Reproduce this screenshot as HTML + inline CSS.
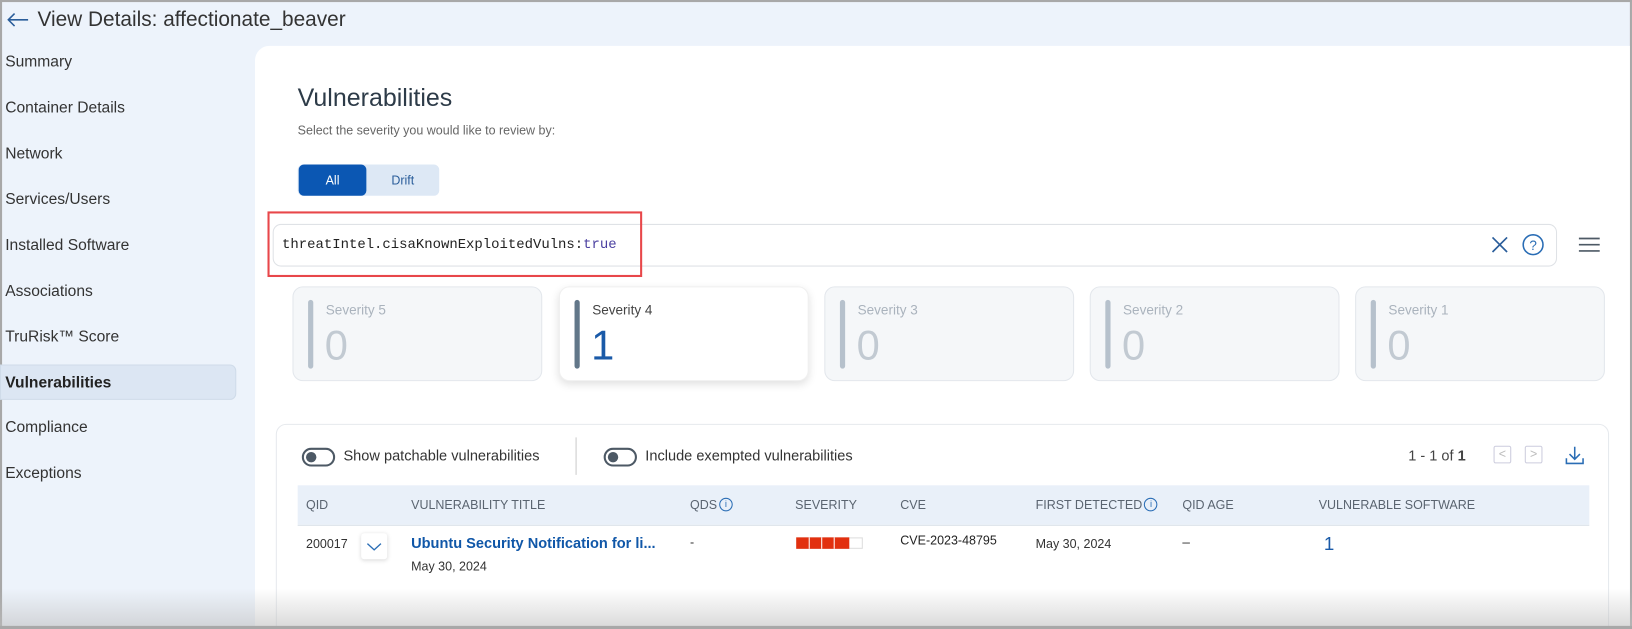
<!DOCTYPE html>
<html><head><meta charset="utf-8"><style>
html,body{margin:0;padding:0;width:1632px;height:629px;overflow:hidden;background:#fff;font-family:"Liberation Sans",Arial,sans-serif;}
#w{position:absolute;left:0;top:0;width:1568px;height:604px;transform:scale(1.0408,1.0414);transform-origin:0 0;background:#edf3fb;overflow:hidden;}
.a{position:absolute;white-space:nowrap;}
.side{font-size:15px;color:#333;left:5px;}
.card{position:absolute;top:275px;width:240px;height:91px;border-radius:10px;background:#f5f7f9;border:1px solid #e3e7ec;box-sizing:border-box;}
.card .bar{position:absolute;left:14px;top:12px;width:5px;height:66px;border-radius:3px;background:#b6c1cc;}
.card .l{position:absolute;left:31px;top:14px;font-size:13px;color:#aab3bd;}
.card .n{position:absolute;left:30px;top:34px;font-size:40px;color:#c2cad2;font-weight:300;}
.th{position:absolute;top:478px;font-size:12px;color:#5a6470;}
.th i{font-style:normal;display:inline-block;width:11px;height:11px;border:1px solid #2a6db5;border-radius:50%;color:#2a6db5;font-size:9px;line-height:11px;text-align:center;vertical-align:top;margin-left:2px;}
.tg{position:absolute;width:28px;height:14px;border:2px solid #4d5965;border-radius:10px;}
.tg:after{content:"";position:absolute;left:2px;top:2px;width:10px;height:10px;border-radius:50%;background:#4d5965;}
</style></head><body><div id="w">
<div class="a" style="left:0;top:0;width:1568px;height:2px;background:#a8a8a8"></div>
<div class="a" style="left:0;top:0;width:2px;height:604px;background:#a8a8a8"></div>
<div class="a" style="left:1566px;top:0;width:2px;height:604px;background:#a8a8a8"></div>
<svg class="a" style="left:6px;top:12px" width="22" height="14"><path d="M21 7H2M8 1L2 7L8 13" fill="none" stroke="#2a5d9a" stroke-width="1.5"/></svg>
<div class="a" style="left:36px;top:8px;font-size:20px;color:#333">View Details: affectionate_beaver</div>

<div class="a side" style="top:51px">Summary</div>
<div class="a side" style="top:95px">Container Details</div>
<div class="a side" style="top:139px">Network</div>
<div class="a side" style="top:183px">Services/Users</div>
<div class="a side" style="top:227px">Installed Software</div>
<div class="a side" style="top:271px">Associations</div>
<div class="a side" style="top:315px">TruRisk™ Score</div>
<div class="a" style="left:0;top:350px;width:227px;height:34px;background:#dce6f3;border-radius:0 6px 6px 0;border:1px solid #cfdbe9;box-sizing:border-box"></div>
<div class="a side" style="top:359px;font-weight:bold;color:#222">Vulnerabilities</div>
<div class="a side" style="top:402px">Compliance</div>
<div class="a side" style="top:446px">Exceptions</div>

<div class="a" style="left:245px;top:44px;width:1321px;height:560px;background:#fff;border-radius:14px 0 0 0"></div>
<div class="a" style="left:286px;top:81px;font-size:24px;color:#2d3b48">Vulnerabilities</div>
<div class="a" style="left:286px;top:118px;font-size:12px;color:#666">Select the severity you would like to review by:</div>
<div class="a" style="left:286px;top:158px;width:136px;height:30px;background:#dde8f5;border-radius:5px"></div>
<div class="a" style="left:287px;top:158px;width:65px;height:30px;background:#0b57b3;border-radius:5px;color:#fff;font-size:12px;text-align:center;line-height:30px">All</div>
<div class="a" style="left:352px;top:158px;width:70px;height:30px;color:#2a5d9a;font-size:12px;text-align:center;line-height:30px">Drift</div>

<div class="a" style="left:262px;top:215px;width:1234px;height:41px;border:1px solid #dfe2e6;border-radius:8px;box-sizing:border-box"></div>
<div class="a" style="left:257px;top:203px;width:360px;height:63px;border:2px solid #e8474a;box-sizing:border-box"></div>
<div class="a" style="left:271px;top:228px;font-family:'Liberation Mono',monospace;font-size:13.4px;color:#222">threatIntel.cisaKnownExploitedVulns:<span style="color:#4a3fa0">true</span></div>
<svg class="a" style="left:1432px;top:226px" width="18" height="18"><path d="M2 2L16 16M16 2L2 16" stroke="#2a5d9a" stroke-width="1.6"/></svg>
<svg class="a" style="left:1462px;top:224px" width="22" height="22"><circle cx="11" cy="11" r="9.5" fill="none" stroke="#2a6db5" stroke-width="1.5"/><text x="11" y="16" font-size="13" text-anchor="middle" fill="#2a6db5" font-family="Liberation Sans">?</text></svg>
<svg class="a" style="left:1516px;top:226px" width="22" height="18"><path d="M1 3H21M1 9H21M1 15H21" stroke="#4d5965" stroke-width="1.6"/></svg>

<div class="card" style="left:281px"><div class="bar"></div><div class="l">Severity 5</div><div class="n">0</div></div>
<div class="card" style="left:537px;background:#fff;border-color:#f0f0f0;box-shadow:0 3px 8px rgba(0,0,0,.12)"><div class="bar" style="background:#627789"></div><div class="l" style="color:#444">Severity 4</div><div class="n" style="color:#1a5aa8">1</div></div>
<div class="card" style="left:792px"><div class="bar"></div><div class="l">Severity 3</div><div class="n">0</div></div>
<div class="card" style="left:1047px"><div class="bar"></div><div class="l">Severity 2</div><div class="n">0</div></div>
<div class="card" style="left:1302px"><div class="bar"></div><div class="l">Severity 1</div><div class="n">0</div></div>

<div class="a" style="left:265px;top:407px;width:1281px;height:220px;border:1px solid #e6e9ed;border-radius:10px;box-sizing:border-box;background:#fff"></div>
<div class="tg" style="left:290px;top:430px"></div>
<div class="a" style="left:330px;top:429px;font-size:14px;color:#333">Show patchable vulnerabilities</div>
<div class="a" style="left:553px;top:420px;width:1px;height:36px;background:#ccc"></div>
<div class="tg" style="left:580px;top:430px"></div>
<div class="a" style="left:620px;top:429px;font-size:14px;color:#333">Include exempted vulnerabilities</div>
<div class="a" style="left:1353px;top:429px;font-size:14px;color:#444">1 - 1 of <b>1</b></div>
<div class="a" style="left:1435px;top:428px;width:17px;height:17px;border:1px solid #ccd;box-sizing:border-box;border-radius:2px;color:#bbb;font-size:12px;text-align:center;line-height:15px">&lt;</div>
<div class="a" style="left:1465px;top:428px;width:17px;height:17px;border:1px solid #ccd;box-sizing:border-box;border-radius:2px;color:#bbb;font-size:12px;text-align:center;line-height:15px">&gt;</div>
<svg class="a" style="left:1503px;top:427px" width="20" height="20"><path d="M10 2V13M5 9L10 14L15 9M2 13V18H18V13" fill="none" stroke="#2a6db5" stroke-width="1.5"/></svg>

<div class="a" style="left:286px;top:466px;width:1241px;height:38px;background:#e9f0f9"></div>
<div class="th" style="left:294px">QID</div>
<div class="th" style="left:395px">VULNERABILITY TITLE</div>
<div class="th" style="left:663px">QDS<i>i</i></div>
<div class="th" style="left:764px">SEVERITY</div>
<div class="th" style="left:865px">CVE</div>
<div class="th" style="left:995px">FIRST DETECTED<i>i</i></div>
<div class="th" style="left:1136px">QID AGE</div>
<div class="th" style="left:1267px">VULNERABLE SOFTWARE</div>
<div class="a" style="left:286px;top:504px;width:1241px;height:1px;background:#dde3ea"></div>

<div class="a" style="left:294px;top:515px;font-size:12px;color:#333">200017</div>
<div class="a" style="left:347px;top:512px;width:25px;height:25px;background:#fff;box-shadow:0 1px 4px rgba(0,0,0,.15);border-radius:3px"></div>
<svg class="a" style="left:352px;top:520px" width="15" height="10"><path d="M1 2L7.5 8L14 2" fill="none" stroke="#2a6db5" stroke-width="1.3"/></svg>
<div class="a" style="left:395px;top:513px;font-size:14px;font-weight:bold;color:#1057a8">Ubuntu Security Notification for li...</div>
<div class="a" style="left:395px;top:537px;font-size:12px;color:#333">May 30, 2024</div>
<div class="a" style="left:663px;top:514px;font-size:12px;color:#333">-</div>
<div class="a" style="left:765px;top:516px;width:64px;height:11px;border:1px solid #ddd;box-sizing:border-box"></div>
<div class="a" style="left:765px;top:516px;width:51px;height:11px;background:#e2300f"></div>
<div class="a" style="left:777px;top:516px;width:1px;height:11px;background:#fff"></div>
<div class="a" style="left:789px;top:516px;width:1px;height:11px;background:#fff"></div>
<div class="a" style="left:801px;top:516px;width:1px;height:11px;background:#fff"></div>
<div class="a" style="left:865px;top:512px;font-size:12px;color:#222">CVE-2023-48795</div>
<div class="a" style="left:995px;top:515px;font-size:12px;color:#333">May 30, 2024</div>
<div class="a" style="left:1136px;top:513px;font-size:13px;color:#333">–</div>
<div class="a" style="left:1272px;top:512px;font-size:18px;color:#1a5aa8">1</div>

<div class="a" style="left:0;top:565px;width:1568px;height:39px;background:linear-gradient(rgba(200,200,200,0),rgba(190,190,190,.6))"></div>
<div class="a" style="left:0;top:601px;width:1568px;height:3px;background:#a8a8a8"></div>
</div></body></html>
